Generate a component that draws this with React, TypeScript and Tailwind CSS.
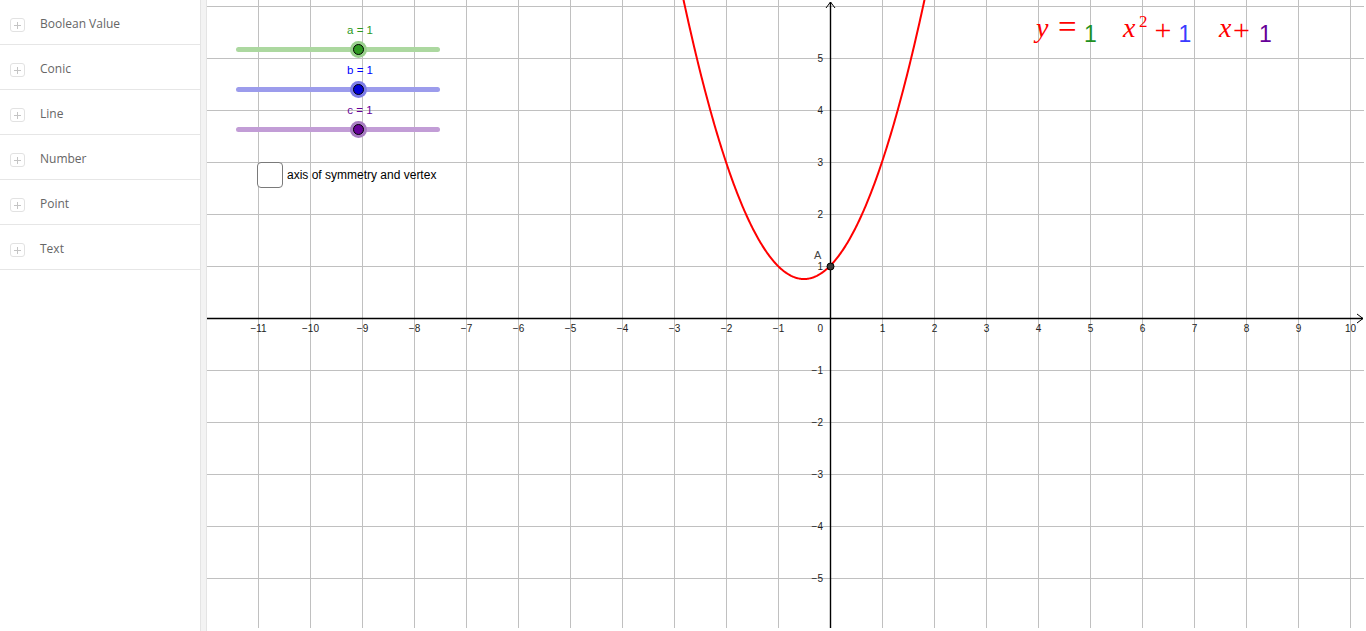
import React from "react";

const U = 52;
const OX = 623;
const OY = 318;
const W = 1157;
const H = 628;

function curvePath(): string {
  const pts: string[] = [];
  const x0 = -2.83;
  const x1 = 1.83;
  const n = 300;
  for (let i = 0; i <= n; i++) {
    const x = x0 + ((x1 - x0) * i) / n;
    const y = x * x + x + 1;
    pts.push(`${i === 0 ? "M" : "L"}${(OX + U * x).toFixed(2)} ${(OY - U * y).toFixed(2)}`);
  }
  return pts.join(" ");
}

const SIDEBAR_ITEMS = ["Boolean Value", "Conic", "Line", "Number", "Point", "Text"];

function PlusBox() {
  return (
    <span className="ml-[10px] mt-[4px] flex h-[14px] w-[15px] shrink-0 items-center justify-center rounded-[3px] border border-[#e2e2e2] bg-white">
      <svg width="9" height="9" viewBox="0 0 9 9">
        <path d="M4.5 1v7M1 4.5h7" stroke="#c4c4c4" strokeWidth="1" />
      </svg>
    </span>
  );
}

type SliderProps = {
  top: string;
  label: string;
  textColor: string;
  trackColor: string;
  haloColor: string;
  dotColor: string;
};

function Slider({ top, label, textColor, trackColor, haloColor, dotColor }: SliderProps) {
  return (
    <div className={`absolute left-[29px] h-[36px] w-[204px] ${top}`}>
      <div
        className={`absolute left-[124px] top-0 -translate-x-1/2 whitespace-nowrap text-[11.5px] leading-[14px] ${textColor}`}
      >
        {label}
      </div>
      <div className={`absolute left-0 top-[24px] h-[5px] w-[204px] rounded-full ${trackColor}`} />
      <div
        className={`absolute left-[114px] top-[18px] flex h-[17px] w-[17px] items-center justify-center rounded-full ${haloColor}`}
      >
        <div className={`h-[11px] w-[11px] rounded-full border border-black ${dotColor}`} />
      </div>
    </div>
  );
}

function Graph() {
  const vLines: number[] = [];
  for (let k = -12; k <= 11; k++) {
    const x = OX + U * k;
    if (k !== 0 && x > 0 && x < W) vLines.push(x);
  }
  const hLines: number[] = [];
  for (let k = -6; k <= 6; k++) {
    const y = OY - U * k;
    if (k !== 0 && y > 0 && y < H) hLines.push(y);
  }
  const xLabels: number[] = [];
  for (let k = -11; k <= 10; k++) if (k !== 0) xLabels.push(k);
  const yLabels: number[] = [];
  for (let k = -5; k <= 5; k++) if (k !== 0) yLabels.push(k);
  const fmt = (k: number) => (k < 0 ? `\u2212${Math.abs(k)}` : `${k}`);

  return (
    <svg width={W} height={H} viewBox={`0 0 ${W} ${H}`} className="block">
      <g stroke="#c0c0c0" strokeWidth="1" shapeRendering="crispEdges">
        {vLines.map((x) => (
          <line key={`v${x}`} x1={x + 0.5} y1={0} x2={x + 0.5} y2={H} />
        ))}
        {hLines.map((y) => (
          <line key={`h${y}`} x1={0} y1={y + 0.5} x2={W} y2={y + 0.5} />
        ))}
      </g>
      <g stroke="#000" strokeWidth="1.4" fill="none">
        <line x1={0} y1={OY + 0.5} x2={1156} y2={OY + 0.5} />
        <line x1={OX + 0.5} y1={2} x2={OX + 0.5} y2={H} />
        <path d={`M1150 ${OY - 4} L1156 ${OY + 0.5} L1150 ${OY + 5}`} strokeWidth="1" />
        <path d={`M${OX - 4} 8 L${OX + 0.5} 2 L${OX + 5} 8`} strokeWidth="1" />
      </g>
      <g fontFamily="'Liberation Sans', Arial, sans-serif" fontSize="10" fill="#222">
        {xLabels.map((k) => (
          <text key={`xl${k}`} x={OX + U * k + 0.5} y={332} textAnchor="middle">
            {fmt(k)}
          </text>
        ))}
        <text x={616} y={332} textAnchor="end">
          0
        </text>
        {yLabels.map((k) => (
          <text key={`yl${k}`} x={616} y={OY - U * k + 4} textAnchor="end">
            {fmt(k)}
          </text>
        ))}
      </g>
      <path d={curvePath()} stroke="#ff0000" strokeWidth="2" fill="none" />
      <circle cx={OX + 0.5} cy={OY - U + 0.5} r={3.5} fill="#3a3a3a" stroke="#000" strokeWidth="1" />
      <text
        x={607}
        y={259}
        fontFamily="'Liberation Sans', Arial, sans-serif"
        fontSize="11"
        fill="#444"
      >
        A
      </text>
      <g fontFamily="'Liberation Serif', 'Times New Roman', serif" fill="#ff0000">
        <text x={829} y={37} fontSize="28" fontStyle="italic">
          y
        </text>
        <text x={851} y={38} fontSize="33">
          =
        </text>
        <text x={916} y={37} fontSize="28" fontStyle="italic">
          x
        </text>
        <text x={932} y={27} fontSize="17">
          2
        </text>
        <text x={947.5} y={39.5} fontSize="30">
          +
        </text>
        <text x={1012} y={37} fontSize="28" fontStyle="italic">
          x
        </text>
        <text x={1026} y={39.5} fontSize="30">
          +
        </text>
      </g>
      <g fontFamily="'Liberation Sans', Arial, sans-serif" fontSize="23">
        <text x={877} y={42} fill="#22901f">
          1
        </text>
        <text x={971.5} y={42} fill="#3a3aff">
          1
        </text>
        <text x={1052} y={42} fill="#660099">
          1
        </text>
      </g>
    </svg>
  );
}

export default function App() {
  return (
    <div className="flex h-[631px] w-[1366px] overflow-hidden bg-white">
      <aside className="w-[200px] shrink-0 font-['Open_Sans',sans-serif]">
        {SIDEBAR_ITEMS.map((t) => (
          <div key={t} className="flex h-[45px] items-center border-b border-[#e6e6e6] pt-[2px]">
            <PlusBox />
            <span className="ml-[15px] mt-[2px] text-[12px] text-[#666]">{t}</span>
          </div>
        ))}
      </aside>
      <div className="h-[631px] w-[7px] shrink-0 border-x border-[#e4e4e4] bg-[#f3f3f3]" />
      <div className="relative h-[628px] w-[1157px] shrink-0 font-['Liberation_Sans',Arial,sans-serif]">
        <Graph />
        <Slider
          top="top-[23px]"
          label="a = 1"
          textColor="text-[#2e9a1e]"
          trackColor="bg-[#acd8a0]"
          haloColor="bg-[#98cf8c]"
          dotColor="bg-[#2f9a22]"
        />
        <Slider
          top="top-[63px]"
          label="b = 1"
          textColor="text-[#0000ff]"
          trackColor="bg-[#9c9cec]"
          haloColor="bg-[#7c7ce8]"
          dotColor="bg-[#0000d8]"
        />
        <Slider
          top="top-[103px]"
          label="c = 1"
          textColor="text-[#660099]"
          trackColor="bg-[#c29dd6]"
          haloColor="bg-[#a77cc2]"
          dotColor="bg-[#660099]"
        />
        <div className="absolute left-[50px] top-[162px] flex items-center">
          <div className="h-[26px] w-[26px] rounded-[4px] border-[1.5px] border-[#7a7a7a] bg-white" />
          <span className="ml-[4px] text-[12px] text-black">axis of symmetry and vertex</span>
        </div>
      </div>
    </div>
  );
}
